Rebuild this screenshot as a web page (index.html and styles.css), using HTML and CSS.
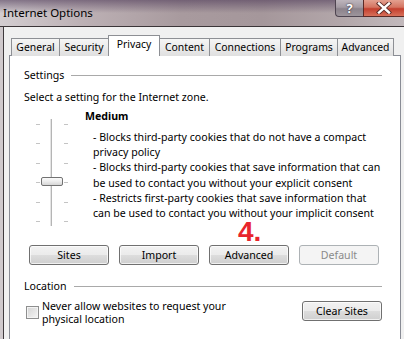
FILE: index.html
```html
<!DOCTYPE html>
<html>
<head>
<meta charset="utf-8">
<link rel="stylesheet" href="styles.css">
</head>
<body>
<div class="window">
  <div class="titlebar">
    <span class="title">Internet Options</span>
    <div class="caption-btns">
      <div class="cap help">?</div>
      <div class="cap close">
        <svg width="16" height="12" viewBox="0 0 16 12"><path d="M3 1.5 L13 10.5 M13 1.5 L3 10.5" stroke="#5a2a26" stroke-width="4.2" stroke-linecap="square"/><path d="M3 1.5 L13 10.5 M13 1.5 L3 10.5" stroke="#ffffff" stroke-width="2.4" stroke-linecap="square"/></svg>
      </div>
    </div>
  </div>
  <div class="client">
    <div class="tabs">
      <div class="tab w-general">General</div>
      <div class="tab w-security">Security</div>
      <div class="tab active w-privacy">Privacy</div>
      <div class="tab w-content">Content</div>
      <div class="tab w-connections">Connections</div>
      <div class="tab w-programs">Programs</div>
      <div class="tab w-advanced">Advanced</div>
    </div>
    <div class="panel">
      <div class="group-head"><span>Settings</span><i class="rule"></i></div>
      <p class="prompt">Select a setting for the Internet zone.</p>
      <div class="zone">
        <div class="slider">
          <div class="track"></div>
          <div class="ticks">
            <div class="tick-row"><i></i><i></i></div>
            <div class="tick-row"><i></i><i></i></div>
            <div class="tick-row"><i></i><i></i></div>
            <div class="tick-row"><i></i><i></i></div>
            <div class="tick-row"><i></i><i></i></div>
            <div class="tick-row"><i></i><i></i></div>
          </div>
          <div class="thumb"></div>
        </div>
        <div class="desc">
          <div class="level">Medium</div>
          <div class="lines">
            <div>- Blocks third-party cookies that do not have a compact</div>
            <div>privacy policy</div>
            <div>- Blocks third-party cookies that save information that can</div>
            <div>be used to contact you without your explicit consent</div>
            <div>- Restricts first-party cookies that save information that</div>
            <div>can be used to contact you without your implicit consent</div>
          </div>
        </div>
      </div>
      <div class="btn-row">
        <div class="btn">Sites</div>
        <div class="btn">Import</div>
        <div class="btn">Advanced</div>
        <div class="btn disabled">Default</div>
      </div>
      <div class="step">4.</div>
      <div class="group-head loc-head"><span>Location</span><i class="rule"></i></div>
      <div class="loc-row">
        <div class="checkbox"></div>
        <div class="loc-label">
          <div>Never allow websites to request your</div>
          <div>physical location</div>
        </div>
        <div class="btn clear">Clear Sites</div>
      </div>
    </div>
  </div>
</div>
</body>
</html>
```
FILE: styles.css
```css
* { box-sizing: border-box; }
html, body { margin: 0; padding: 0; }
body {
  width: 404px;
  height: 339px;
  overflow: hidden;
  font-family: "Noto Sans", "Open Sans", sans-serif;
  font-size: 10.6px;
  color: #000;
  background: #cfc9cc;
}
.window {
  width: 404px;
  height: 339px;
  display: flex;
  flex-direction: column;
  overflow: hidden;
}
.titlebar {
  height: 27px;
  flex: none;
  display: flex;
  align-items: flex-start;
  border-bottom: 1px solid #3b3538;
  background:
    linear-gradient(to bottom, rgba(80,60,90,0.6) 0, rgba(80,60,90,0.3) 25%, rgba(80,60,90,0) 50%),
    linear-gradient(to right, #d3cdd0 0, #bdb1b5 20%, #a89a9e 45%, #a5979b 65%, #b3a7aa 85%, #c2b9bc 100%);
}
.title {
  padding: 5px 0 0 3px;
  font-size: 11.5px;
  line-height: 16px;
  color: #000;
}
.caption-btns {
  margin-left: auto;
  display: flex;
  height: 17px;
}
.cap {
  height: 17px;
  display: flex;
  align-items: center;
  justify-content: center;
}
.help {
  width: 28px;
  border: 1px solid #4e4450;
  border-top: none;
  border-right: none;
  border-bottom-left-radius: 4px;
  background: linear-gradient(to bottom, #bdb5bc 0, #a49ba3 45%, #8b828b 55%, #9d959c 100%);
  color: #fff;
  font-weight: bold;
  font-size: 13px;
  text-shadow: 0 0 2px #3c3440, 0 0 1px #3c3440;
}
.close {
  width: 41px;
  border-left: 1px solid #5b2a26;
  border-bottom: 1px solid #5b2a26;
  background: linear-gradient(to bottom, #e3a090 0, #d47461 45%, #c33f2e 55%, #d8705a 100%);
}
.client {
  flex: 1;
  background: #f0f0f0;
  margin-left: 3px;
  border-left: 1px solid #3f3a3d;
  padding: 8px 3px 0 5px;
  display: flex;
  flex-direction: column;
}
.tabs {
  display: flex;
  align-items: flex-end;
  height: 21px;
  padding-left: 2px;
  margin-bottom: -1px;
  position: relative;
  z-index: 1;
  font-size: 10.4px;
}
.tab {
  flex: none;
  height: 18px;
  border: 1px solid #8d8f94;
  border-bottom: none;
  margin-left: -1px;
  background: linear-gradient(to bottom, #f5f5f5 0, #ebebeb 50%, #dfdfdf 100%);
  display: flex;
  align-items: center;
  justify-content: center;
  padding-bottom: 1px;
  white-space: nowrap;
}
.tab:first-child { margin-left: 0; }
.tab.active {
  height: 21px;
  background: #fff;
  padding-bottom: 4px;
  position: relative;
  z-index: 2;
}
.w-general { width: 49px; }
.w-security { width: 50px; }
.w-privacy { width: 52px; }
.w-content { width: 51px; }
.w-connections { width: 72px; }
.w-programs { width: 58px; }
.w-advanced { width: 57px; }

.panel {
  flex: 1;
  background: #fff;
  border: 1px solid #898c95;
  border-bottom: none;
  padding: 12px 18px 0 14px;
  position: relative;
}
.group-head {
  display: flex;
  align-items: center;
  gap: 7px;
  height: 14px;
  line-height: 14px;
}
.rule {
  flex: 1;
  height: 1px;
  background: #a9a9a9;
}
.prompt {
  margin: 8px 0 0 0;
  line-height: 14px;
}
.zone {
  margin-top: 5px;
  display: flex;
  align-items: flex-start;
}
.slider {
  flex: none;
  margin: 10px 0 0 11px;
  width: 34px;
  height: 107px;
  position: relative;
}
.track {
  position: absolute;
  left: 15px;
  top: 0;
  width: 3px;
  height: 107px;
  border-left: 1px solid #e4e4e4;
  border-right: 1px solid #ffffff;
  background: #b5b5b5;
}
.ticks {
  height: 107px;
  padding: 5px 1px 4px 1px;
  display: flex;
  flex-direction: column;
  justify-content: space-between;
}
.tick-row {
  height: 1px;
  display: flex;
  justify-content: space-between;
}
.tick-row i {
  display: block;
  width: 4px;
  height: 1px;
  background: #c4c4c4;
}
.thumb {
  position: absolute;
  left: 6px;
  top: 58px;
  width: 22px;
  height: 9px;
  border: 1px solid #727272;
  border-radius: 2px;
  background: linear-gradient(to bottom, #fbfbfb 0, #ececec 50%, #d6d6d6 100%);
}
.desc {
  margin-left: 16px;
}
.level {
  font-weight: bold;
  line-height: 14px;
}
.lines {
  margin: 7px 0 0 8px;
  line-height: 15.2px;
  white-space: nowrap;
}
.btn-row {
  margin: 19px 0 0 5px;
  display: flex;
  gap: 10px;
}
.btn {
  flex: none;
  width: 80px;
  height: 20px;
  border: 1px solid #707070;
  border-radius: 3px;
  background: linear-gradient(to bottom, #f2f2f2 0, #ebebeb 50%, #dddddd 51%, #cfcfcf 100%);
  box-shadow: inset 0 0 0 1px rgba(255,255,255,0.7);
  display: flex;
  align-items: center;
  justify-content: center;
  white-space: nowrap;
}
.btn.disabled {
  border-color: #adb2b5;
  background: #f4f4f4;
  box-shadow: none;
  color: #8a8a8a;
}
.step {
  position: absolute;
  left: 228px;
  top: 166px;
  font-family: "Liberation Sans", Arial, sans-serif;
  font-weight: bold;
  font-size: 28px;
  line-height: 20px;
  color: #e8242c;
}
.loc-head {
  margin-top: 14px;
}
.loc-row {
  margin-top: 7px;
  display: flex;
  align-items: flex-start;
}
.checkbox {
  flex: none;
  width: 13px;
  height: 13px;
  margin: 6px 0 0 2px;
  border: 1px solid #8e8f8f;
  background: linear-gradient(135deg, #d4d4d4 0, #e8e8e8 60%, #f6f6f6 100%);
  box-shadow: inset 0 0 0 1px #f4f4f4;
}
.loc-label {
  margin-left: 3px;
  line-height: 13px;
  white-space: nowrap;
}
.btn.clear {
  margin-left: auto;
  margin-top: 1px;
}
```
